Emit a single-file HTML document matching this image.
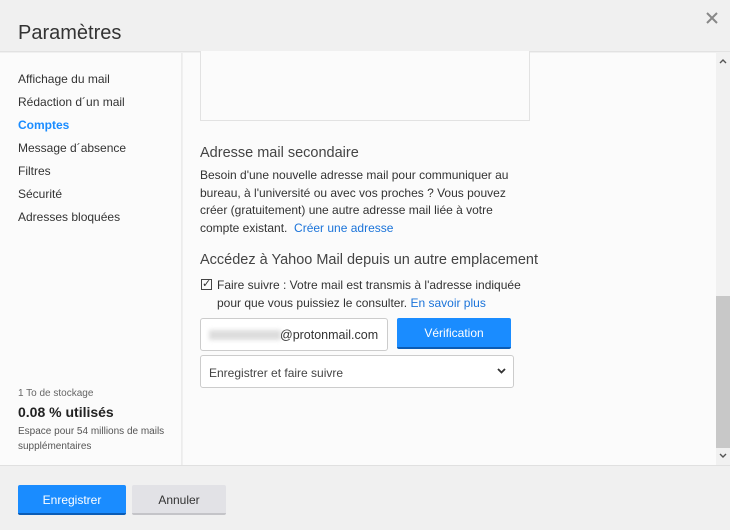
<!DOCTYPE html>
<html><head><meta charset="utf-8"><style>
*{box-sizing:border-box;margin:0;padding:0}
body{width:730px;height:530px;overflow:hidden;background:#f0f0f0;font-family:"Liberation Sans","DejaVu Sans",sans-serif;color:#333;position:relative}
.hdr{position:absolute;left:0;top:0;width:730px;height:52px;background:#f0f0f0;border-bottom:1px solid #e2e2e2}
.hdr h1{position:absolute;left:18px;top:22px;font-size:20px;font-weight:normal;color:#333}
.side{position:absolute;left:0;top:53px;width:182px;height:412px;background:#fbfbfb;border-right:1px solid #ececec}
.side a{position:absolute;left:18px;font-size:12px;color:#333}
.main{position:absolute;left:183px;top:53px;width:533px;height:412px;background:#fbfbfb}
.sb{position:absolute;left:716px;top:53px;width:14px;height:412px;background:#f1f1f1}
.thumb{position:absolute;left:716px;top:296px;width:14px;height:152px;background:#c8c8c8}
.p{position:absolute;font-size:12px;color:#333;line-height:17.5px}
.blue{color:#1a73d9}
.btn{position:absolute;font-size:12px;text-align:center;border-radius:2px}
.foot{position:absolute;left:0;top:465px;width:730px;height:65px;background:#f0f0f0;border-top:1px solid #e0e0e0}
</style></head><body>
<div class="hdr"><h1>Paramètres</h1>
<svg style="position:absolute;left:706px;top:12px" width="12" height="12" viewBox="0 0 12 12"><path d="M1 1L11 11M11 1L1 11" stroke="#888" stroke-width="2"/></svg></div>
<div class="side">
<a style="top:19px">Affichage du mail</a>
<a style="top:42px">Rédaction d´un mail</a>
<a style="top:65px;color:#1a8cff;font-weight:bold">Comptes</a>
<a style="top:88px">Message d´absence</a>
<a style="top:111px">Filtres</a>
<a style="top:134px">Sécurité</a>
<a style="top:157px">Adresses bloquées</a>
<div style="position:absolute;left:18px;top:335px;font-size:10px;color:#666">1 To de stockage</div>
<div style="position:absolute;left:18px;top:351px;font-size:14px;font-weight:bold;color:#222">0.08 % utilisés</div>
<div style="position:absolute;left:18px;top:371px;font-size:10px;color:#555;line-height:15px">Espace pour 54 millions de mails<br>supplémentaires</div>
</div>
<div class="main">
<div style="position:absolute;left:17px;top:-2px;width:330px;height:70px;border:1px solid #e2e2e2;border-top:none;background:#fbfbfb"></div>
<div class="p" style="left:17px;top:92px;font-size:14.5px;color:#444">Adresse mail secondaire</div>
<div class="p" style="left:17px;top:114px;width:320px">Besoin d'une nouvelle adresse mail pour communiquer au bureau, à l'université ou avec vos proches ? Vous pouvez créer (gratuitement) une autre adresse mail liée à votre compte existant.&nbsp; <span class="blue">Créer une adresse</span></div>
<div class="p" style="left:17px;top:199px;font-size:14.5px;color:#444">Accédez à Yahoo Mail depuis un autre emplacement</div>
<div style="position:absolute;left:18px;top:226px;width:11px;height:11px;border:1px solid #444;font-size:11px;line-height:9px;text-align:center">✓</div>
<div class="p" style="left:34px;top:224px;width:325px">Faire suivre : Votre mail est transmis à l'adresse indiquée pour que vous puissiez le consulter. <span class="blue">En savoir plus</span></div>
<div style="position:absolute;left:17px;top:265px;width:188px;height:33px;border:1px solid #ccc;border-radius:3px;background:#fff">
<div style="position:absolute;left:8px;top:11px;width:72px;height:10px;background:#ddd;filter:blur(2px)"></div>
<div style="position:absolute;left:79px;top:9px;font-size:12.5px;color:#333">@protonmail.com</div></div>
<div class="btn" style="left:214px;top:265px;width:114px;height:31px;background:#1a8cff;color:#fff;line-height:31px;border-bottom:2px solid #0b5cb5">Vérification</div>
<div style="position:absolute;left:17px;top:302px;width:314px;height:33px;border:1px solid #ccc;border-radius:3px;background:#fff;font-size:12px;color:#444;padding:10px 0 0 8px">Enregistrer et faire suivre
<svg style="position:absolute;right:7px;top:12px" width="9" height="6" viewBox="0 0 9 6"><path d="M1 1L4.5 4.5L8 1" stroke="#333" stroke-width="1.8" fill="none"/></svg></div>
</div>
<div class="sb"></div><div class="thumb"></div>
<svg style="position:absolute;left:719px;top:58px" width="8" height="6" viewBox="0 0 8 6"><path d="M1 5L4 2L7 5" stroke="#555" stroke-width="1.4" fill="none"/></svg>
<svg style="position:absolute;left:719px;top:453px" width="8" height="6" viewBox="0 0 8 6"><path d="M1 1L4 4L7 1" stroke="#555" stroke-width="1.4" fill="none"/></svg>
<div class="foot">
<div class="btn" style="left:18px;top:19px;width:108px;height:30px;background:#1a8cff;color:#fff;line-height:30px;border-bottom:2px solid #0b5cb5">Enregistrer</div>
<div class="btn" style="left:132px;top:19px;width:94px;height:30px;background:#e2e2e6;color:#333;line-height:30px;border-bottom:2px solid #c4c4c8">Annuler</div>
</div>
</body></html>
